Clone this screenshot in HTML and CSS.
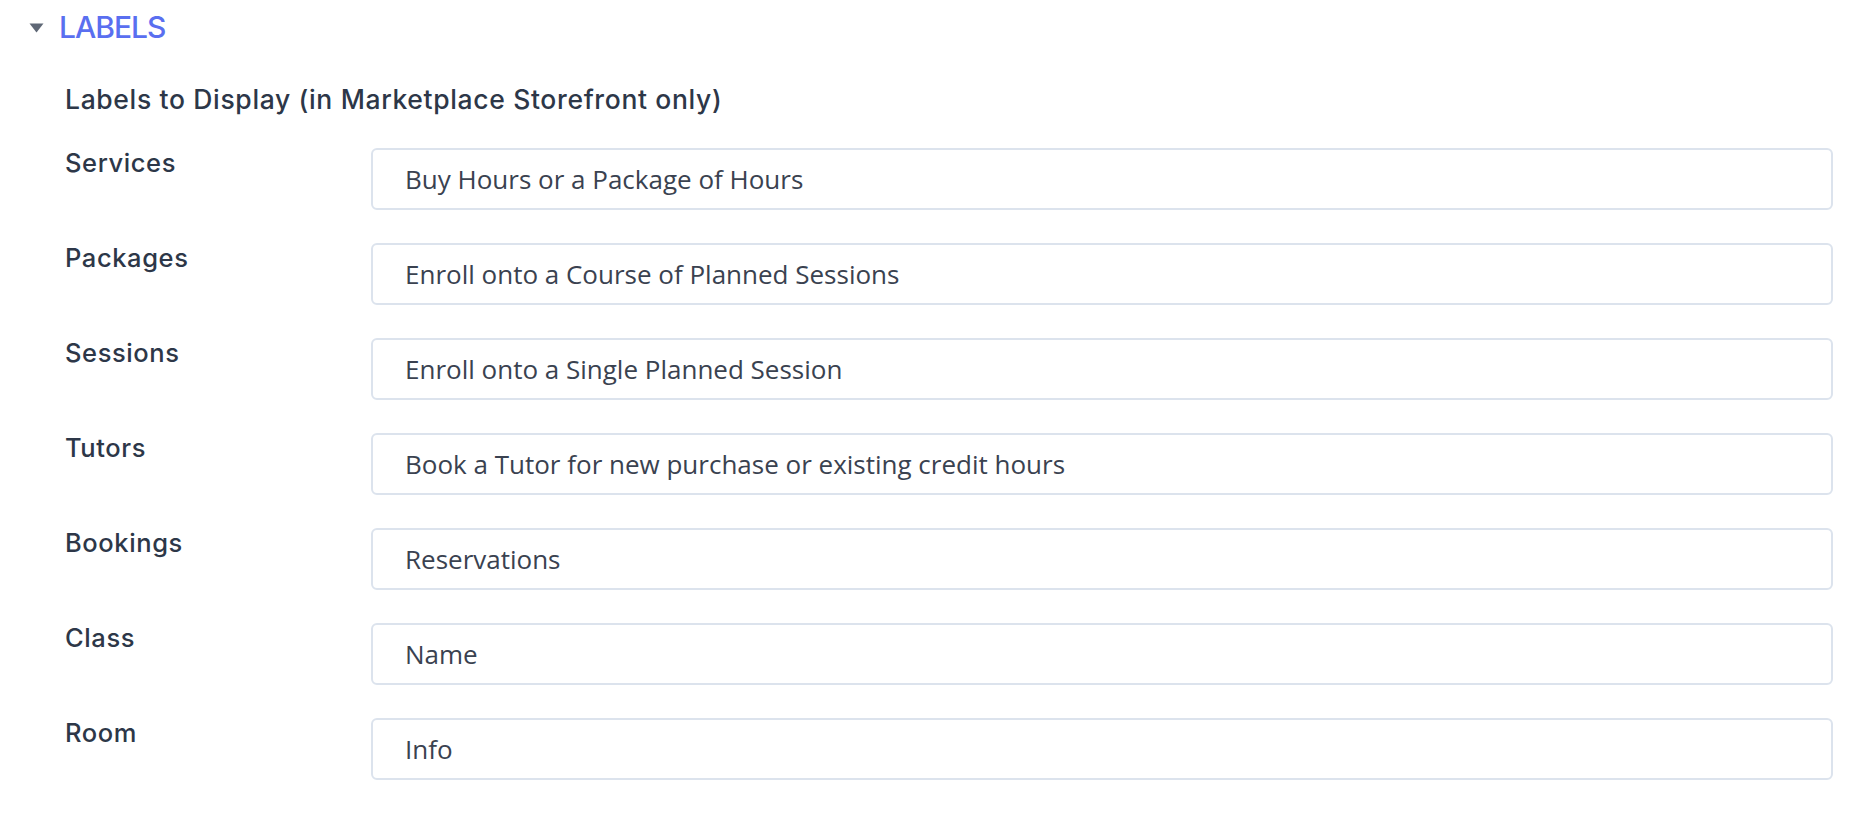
FILE: index.html
```html
<!DOCTYPE html>
<html lang="en">
<head>
<meta charset="utf-8">
<title>Labels</title>
<link rel="stylesheet" href="styles.css">
</head>
<body>
<section class="panel">
  <header class="panel-head">
    <svg class="caret" width="15" height="10" viewBox="0 0 15 10" aria-hidden="true"><path d="M0.5 0.5 H14.5 L7.5 9.5 Z" fill="#5f6876"/></svg>
    <h2 class="panel-title">LABELS</h2>
  </header>
  <div class="panel-body">
    <h3 class="group-title">Labels to Display (in Marketplace Storefront only)</h3>
    <div class="fields">
      <label class="field-label">Services</label>
      <div class="field-input">Buy Hours or a Package of Hours</div>
      <label class="field-label">Packages</label>
      <div class="field-input">Enroll onto a Course of Planned Sessions</div>
      <label class="field-label">Sessions</label>
      <div class="field-input">Enroll onto a Single Planned Session</div>
      <label class="field-label">Tutors</label>
      <div class="field-input">Book a Tutor for new purchase or existing credit hours</div>
      <label class="field-label">Bookings</label>
      <div class="field-input">Reservations</div>
      <label class="field-label">Class</label>
      <div class="field-input">Name</div>
      <label class="field-label">Room</label>
      <div class="field-input">Info</div>
    </div>
  </div>
</section>
</body>
</html>
```
FILE: styles.css
```css
html, body {
  margin: 0;
  padding: 0;
  background: #ffffff;
}
body {
  font-family: "Open Sans", "Liberation Sans", sans-serif;
  color: #2d3748;
}
.panel {
  padding: 7px 35px 0 29px;
}
.panel-head {
  display: flex;
  align-items: center;
  gap: 15px;
  height: 40px;
}
.caret {
  display: block;
  margin-top: 2px;
}
.panel-title {
  margin: 0;
  font-family: "Inter", "Open Sans", sans-serif;
  font-size: 30px;
  line-height: 40px;
  font-weight: 500;
  letter-spacing: -1px;
  color: #5a6ff0;
}
.panel-body {
  padding-left: 36px;
}
.group-title {
  margin: 34px 0 0;
  font-family: "Inter", "Open Sans", sans-serif;
  font-size: 26.5px;
  line-height: 36px;
  font-weight: 500;
  letter-spacing: 0.65px;
  color: #2d3748;
}
.fields {
  margin-top: 31px;
  display: grid;
  grid-template-columns: 306px 1fr;
  row-gap: 33px;
}
.field-label {
  font-family: "Inter", "Open Sans", sans-serif;
  font-size: 25.5px;
  line-height: 30px;
  font-weight: 500;
  letter-spacing: 0.6px;
  color: #2d3748;
}
.field-input {
  height: 62px;
  box-sizing: border-box;
  border: 2px solid #dce3ed;
  border-radius: 6px;
  padding: 0 32px;
  display: flex;
  align-items: center;
  font-size: 26px;
  color: #3a4250;
  background: #fff;
}
```
